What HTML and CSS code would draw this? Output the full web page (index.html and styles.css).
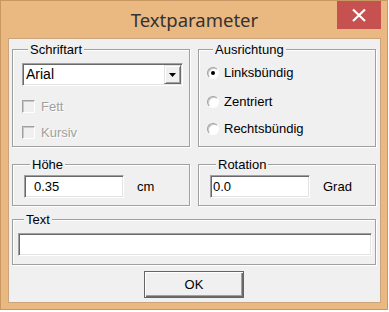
FILE: index.html
```html
<!DOCTYPE html>
<html lang="de">
<head>
    <meta charset="UTF-8">
    <title>Textparameter</title>
    <link rel="stylesheet" href="styles.css">
</head>
<body>

<div class="window">
    <div class="titlebar">
        <span></span>
        <div class="title">Textparameter</div>
        <button class="close" type="button">
            <svg width="44" height="28" viewBox="0 0 44 28">
                <path d="M16 8.5 L28 20 M28 8.5 L16 20" stroke="#fff" stroke-width="2.2" fill="none"/>
            </svg>
        </button>
    </div>

    <div class="client">
        <div class="row row-top">
            <div class="group group-font">
                <div class="group-title">Schriftart</div>
                <div class="combo">
                    <span class="combo-value">Arial</span>
                    <span class="combo-btn">
                        <svg width="7" height="4" viewBox="0 0 7 4"><path d="M0 0 H7 L3.5 4 Z" fill="#000"/></svg>
                    </span>
                </div>
                <label class="check check-first disabled"><span class="checkbox"></span>Fett</label>
                <label class="check check-second disabled"><span class="checkbox"></span>Kursiv</label>
            </div>

            <div class="group group-align">
                <div class="group-title">Ausrichtung</div>
                <label class="radio radio-1"><span class="radio-dot checked"></span>Linksbündig</label>
                <label class="radio radio-2"><span class="radio-dot"></span>Zentriert</label>
                <label class="radio radio-3"><span class="radio-dot"></span>Rechtsbündig</label>
            </div>
        </div>

        <div class="row row-mid">
            <div class="group group-field">
                <div class="group-title">Höhe</div>
                <div class="field-row">
                    <div class="textbox textbox-indent">0.35</div>
                    <span class="unit">cm</span>
                </div>
            </div>
            <div class="group group-field">
                <div class="group-title">Rotation</div>
                <div class="field-row">
                    <div class="textbox">0.0</div>
                    <span class="unit">Grad</span>
                </div>
            </div>
        </div>

        <div class="group group-text">
            <div class="group-title">Text</div>
            <div class="textbox textbox-wide"></div>
        </div>

        <div class="actions">
            <button class="btn" type="button">OK</button>
        </div>
    </div>
</div>

</body>
</html>
```

FILE: styles.css
```css
* {
    box-sizing: border-box;
}
body {
    margin: 0;
    background-color: #fff;
    font-family: "Liberation Sans", Arial, sans-serif;
    font-size: 13px;
    color: #000;
}
.window {
    width: 388px;
    height: 310px;
    background-color: #eab881;
    border: 1px solid #c99862;
    padding: 0 6px 6px 7px;
    display: flex;
    flex-direction: column;
}
.titlebar {
    height: 37px;
    display: grid;
    grid-template-columns: 1fr auto 1fr;
}
.title {
    font-family: "Noto Sans", sans-serif;
    font-size: 18.5px;
    line-height: 36px;
    padding-top: 1px;
    color: #333;
    white-space: nowrap;
}
.close {
    justify-self: end;
    align-self: start;
    width: 44px;
    height: 28px;
    padding: 0;
    border: none;
    background-color: #c75050;
    display: block;
}
.close svg {
    display: block;
}
.client {
    flex: 1;
    background-color: #f0f0f0;
    border: 1px solid #c9a47c;
    padding: 10px 4px 0 3px;
}
.row {
    display: grid;
    grid-template-columns: 178px 178px;
    column-gap: 8px;
}
.row-top {
    height: 98px;
}
.row-mid {
    height: 42px;
    margin-top: 17px;
}
.group {
    border: 1px solid #a0a0a0;
    box-shadow: inset 1px 1px #fff, 1px 1px #fff;
    display: flex;
    flex-direction: column;
    align-items: flex-start;
}
.group-title {
    margin: -8px 0 0 6px;
    padding: 0 2px;
    background-color: #f0f0f0;
    line-height: 15px;
    white-space: nowrap;
}

/* Schriftart */
.group-font {
    padding: 0 5px 0 9px;
}
.combo {
    margin-top: 6px;
    width: 161px;
    height: 23px;
    background-color: #fff;
    border: 1px solid;
    border-color: #a0a0a0 #fff #fff #a0a0a0;
    box-shadow: inset 1px 1px #696969, inset -1px -1px #e3e3e3;
    display: flex;
    padding: 1px;
}
.combo-value {
    flex: 1;
    font-size: 14px;
    line-height: 19px;
    padding-left: 2px;
}
.combo-btn {
    width: 17px;
    height: 19px;
    background-color: #f0f0f0;
    border: 1px solid;
    border-color: #e3e3e3 #696969 #696969 #e3e3e3;
    box-shadow: inset 1px 1px #fff, inset -1px -1px #a0a0a0;
    display: flex;
    align-items: center;
    justify-content: center;
}
.combo-btn svg {
    display: block;
}
.check {
    display: flex;
    align-items: center;
    height: 15px;
    line-height: 15px;
    gap: 6px;
}
.check-first {
    margin-top: 13px;
}
.check-second {
    margin-top: 11px;
}
.checkbox {
    width: 13px;
    height: 13px;
    background-color: #f0f0f0;
    border: 1px solid;
    border-color: #a0a0a0 #fff #fff #a0a0a0;
    box-shadow: inset 1px 1px #c8c8c8;
}
.disabled {
    color: #a0a0a0;
    text-shadow: 1px 1px #fff;
}

/* Ausrichtung */
.group-align {
    padding-left: 8px;
}
.radio {
    display: flex;
    align-items: center;
    height: 15px;
    line-height: 15px;
    gap: 5px;
}
.radio-1 {
    margin-top: 8px;
}
.radio-2 {
    margin-top: 14px;
}
.radio-3 {
    margin-top: 12px;
}
.radio-dot {
    width: 12px;
    height: 12px;
    border-radius: 50%;
    background-color: #fff;
    border: 1px solid;
    border-color: #a0a0a0 #fff #fff #a0a0a0;
    box-shadow: inset 1px 1px #c8c8c8;
    display: flex;
    align-items: center;
    justify-content: center;
}
.radio-dot.checked::after {
    content: "";
    width: 4px;
    height: 4px;
    border-radius: 50%;
    background-color: #000;
}

/* Höhe / Rotation */
.group-field {
    padding-left: 11px;
}
.field-row {
    margin-top: 3px;
    display: flex;
    align-items: center;
    gap: 13px;
}
.textbox {
    width: 100px;
    height: 23px;
    background-color: #fff;
    border: 1px solid;
    border-color: #a0a0a0 #fff #fff #a0a0a0;
    box-shadow: inset 1px 1px #696969, inset -1px -1px #e3e3e3;
    padding: 1px 2px;
    line-height: 19px;
}
.textbox-indent {
    padding-left: 9px;
}
.unit {
    line-height: 15px;
}

/* Text */
.group-text {
    height: 46px;
    margin-top: 13px;
    padding-left: 5px;
}
.textbox-wide {
    margin-top: 6px;
    width: 354px;
}

.actions {
    margin-top: 6px;
    display: flex;
    justify-content: center;
}
.btn {
    width: 100px;
    height: 27px;
    padding: 0;
    font-family: "Liberation Sans", Arial, sans-serif;
    font-size: 13px;
    color: #000;
    background-color: #f0f0f0;
    border: 1px solid #646464;
    box-shadow: inset 1px 1px #fff, inset -1px -1px #696969, inset -2px -2px #a0a0a0;
}
```
